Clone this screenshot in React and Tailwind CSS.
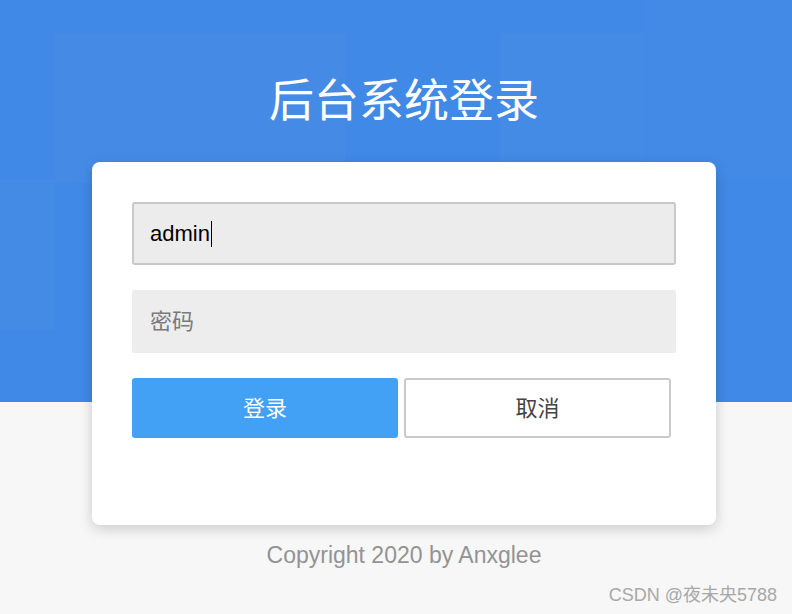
import React from "react";

const cjk = "font-['Liberation_Sans','Noto_Sans_CJK_SC',sans-serif]";

const App = () => {
    return (
        <div className={`relative w-full min-h-[614px] overflow-hidden bg-[linear-gradient(to_bottom,#4189e6_402px,#f7f7f7_402px)] ${cjk}`}>
            {/* Faint squares over the blue band */}
            <div className="absolute left-[55px] top-[33px] w-[290px] h-[150px] bg-white/[0.025]"></div>
            <div className="absolute left-[500px] top-[33px] w-[145px] h-[150px] bg-white/[0.02]"></div>
            <div className="absolute left-[645px] top-0 w-[147px] h-[180px] bg-white/[0.015]"></div>
            <div className="absolute left-0 top-[180px] w-[55px] h-[150px] bg-white/[0.02]"></div>

            <div className="relative flex flex-col items-center pl-4">
                {/* Title */}
                <h1 className="mt-[76px] text-[45px] leading-[44px] text-white font-['Noto_Sans_CJK_SC',sans-serif] font-normal">
                    后台系统登录
                </h1>

                {/* Card */}
                <div className="mt-[42px] w-[624px] bg-white rounded-lg shadow-[0_4px_14px_rgba(0,0,0,0.18)] px-10 pt-10 pb-[87px]">
                    <div className="h-[63px] bg-[#ececec] border-2 border-[#c9c9c9] rounded-[3px] flex items-center pl-4">
                        <span className="text-[22px] text-black">admin</span>
                        <span className="ml-px w-px h-[26px] bg-black"></span>
                    </div>
                    <div className="mt-[25px] h-[63px] bg-[#ededed] rounded-[3px] flex items-center pl-[18px]">
                        <span className="text-[22px] text-[#7a7a7a]">密码</span>
                    </div>
                    <div className="mt-[25px] flex gap-[6px]">
                        <button className="w-[266px] h-[60px] bg-[#42a0f5] rounded-[3px] text-white text-[22px]">
                            登录
                        </button>
                        <button className="w-[267px] h-[60px] bg-white border-2 border-[#cacaca] rounded-[3px] text-[#444] text-[22px]">
                            取消
                        </button>
                    </div>
                </div>

                {/* Footer */}
                <p className="mt-[16px] text-[23px] leading-[28px] text-[#939393]">Copyright 2020 by Anxglee</p>
            </div>

            {/* Watermark */}
            <span className="absolute right-[15px] top-[584px] text-[18px] leading-[22px] text-[#a8a8a8]">
                CSDN @夜未央5788
            </span>
        </div>
    );
};

export default App;
